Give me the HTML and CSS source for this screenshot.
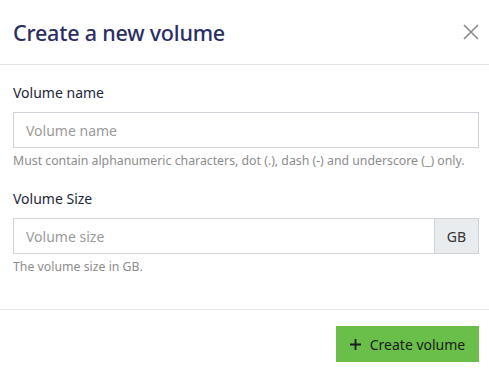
FILE: index.html
```html
<!DOCTYPE html>
<html lang="en">
<head>
    <meta charset="UTF-8">
    <meta name="viewport" content="width=device-width, initial-scale=1.0">
    <title>Create a new volume</title>
    <link rel="stylesheet" href="styles.css">
</head>
<body>
    <div class="modal">
        <div class="modal-header">
            <h1>Create a new volume</h1>
            <button class="close" aria-label="Close">
                <svg width="16" height="16" viewBox="0 0 16 16">
                    <path d="M1 1L15 15M15 1L1 15" stroke="#888" stroke-width="1.6" fill="none"/>
                </svg>
            </button>
        </div>
        <form class="modal-body">
            <div class="form-group">
                <label for="volumeName">Volume name</label>
                <input type="text" id="volumeName" placeholder="Volume name">
                <small>Must contain alphanumeric characters, dot (.), dash (-) and underscore (_) only.</small>
            </div>
            <div class="form-group">
                <label for="volumeSize">Volume Size</label>
                <div class="input-group">
                    <input type="text" id="volumeSize" placeholder="Volume size">
                    <span class="addon">GB</span>
                </div>
                <small>The volume size in GB.</small>
            </div>
        </form>
        <div class="modal-footer">
            <button class="btn-create" type="submit">
                <svg width="11" height="11" viewBox="0 0 11 11">
                    <path d="M5.5 0V11M0 5.5H11" stroke="#1b1b1b" stroke-width="1.8" fill="none"/>
                </svg>
                Create volume
            </button>
        </div>
    </div>
</body>
</html>
```

FILE: styles.css
```css
body {
    margin: 0;
    font-family: 'Noto Sans', 'Open Sans', sans-serif;
    background: #ffffff;
    color: #212529;
}
.modal {
    width: 489px;
}
.modal-header {
    height: 64px;
    padding: 0 10px 0 13px;
    border-bottom: 1px solid #e4e4e4;
    display: flex;
    align-items: center;
    justify-content: space-between;
}
.modal-header h1 {
    margin: 0;
    font-size: 21.5px;
    font-weight: 500;
    color: #2b2e63;
    letter-spacing: -0.2px;
}
.close {
    background: none;
    border: none;
    padding: 0;
    width: 16px;
    height: 16px;
    display: flex;
    cursor: pointer;
}
.modal-body {
    padding: 18px 10px 34px 13px;
}
.form-group {
    margin-bottom: 20px;
}
.form-group:last-child {
    margin-bottom: 0;
}
label {
    display: block;
    font-size: 14px;
    line-height: 20px;
    margin-bottom: 9px;
    color: #23263a;
}
input {
    box-sizing: border-box;
    width: 100%;
    height: 36px;
    padding: 0 12px;
    border: 1px solid #ced4da;
    font-family: inherit;
    font-size: 14px;
    color: #333;
    outline: none;
}
input::placeholder {
    color: #9a9a9a;
}
small {
    display: block;
    margin-top: 5px;
    font-size: 12.3px;
    line-height: 16px;
    color: #8c8c8c;
}
.input-group {
    display: flex;
}
.input-group input {
    flex: 1;
    border-right: none;
}
.addon {
    box-sizing: border-box;
    width: 45px;
    height: 36px;
    display: flex;
    align-items: center;
    justify-content: center;
    background: #e9ecef;
    border: 1px solid #ced4da;
    font-size: 14px;
    color: #333;
}
.modal-footer {
    border-top: 1px solid #e4e4e4;
    padding: 16px 10px 0 0;
    display: flex;
    justify-content: flex-end;
}
.btn-create {
    width: 143px;
    height: 36px;
    background: #6abf4b;
    border: none;
    font-family: inherit;
    font-size: 14px;
    color: #1b1b1b;
    display: flex;
    align-items: center;
    justify-content: center;
    gap: 9px;
    cursor: pointer;
}
```
